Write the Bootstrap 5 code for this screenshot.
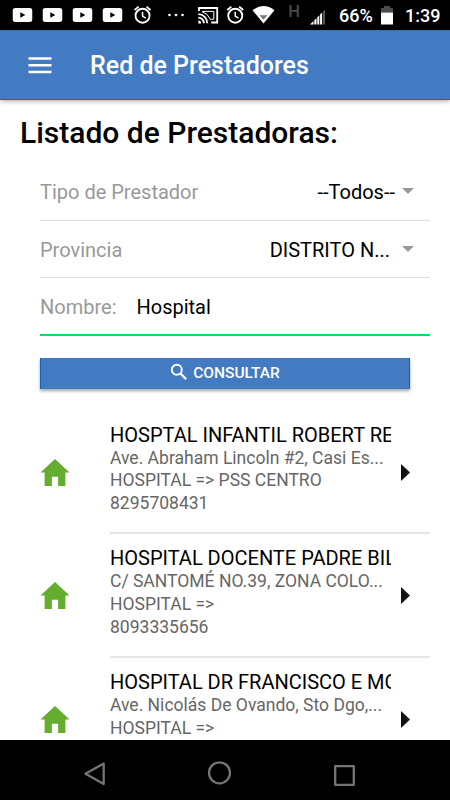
<!DOCTYPE html>
<html lang="es">
<head>
<meta charset="utf-8">
<meta name="viewport" content="width=device-width, initial-scale=1">
<title>Red de Prestadores</title>
<link href="https://cdn.jsdelivr.net/npm/bootstrap@5.3.0/dist/css/bootstrap.min.css" rel="stylesheet">
<style>
  body { font-family: Roboto, "Liberation Sans", sans-serif; color: #000; line-height: 1.2; }
  svg { display: block; flex: none; }
  .screen { width: 450px; height: 800px; }
  .status { height: 30px; font-size: 18px; font-weight: 500; line-height: 30px; padding-top: 1px; }
  .status svg { margin-top: -1px; }
  .status .pct { width: 41px; margin-left: 3px; }
  .status .clock { margin-left: 1px; }
  .appbar { height: 70px; background: #427bc2; border-bottom: 1px solid #1668b4; border-top: 1px solid #2f74bf; box-shadow: 0 1px 5px rgba(0,0,0,.35); padding-left: 28px; z-index: 1; }
  .appbar h1 { font-size: 25px; font-weight: 500; margin-left: 38px; padding-top: 2px; }
  .heading { font-size: 30px; font-weight: 500; line-height: 36px; margin: 15px 0 0 20px; }
  .fields { margin: 12px 20px 0 40px; font-size: 20px; }
  .field-row { height: 57.6px; border-bottom: 1.5px solid #dedede; padding-right: 16px; }
  .field-row span { padding-top: 2px; }
  .field-row .name { color: #999; }
  .field-row.active { border-bottom: 2px solid #03de65; }
  .field-row .value { margin-right: 12px; }
  .field-row .value.tight { margin-right: 7px; }
  .consult { height: 31px; width: 370px; margin: 22px 0 0 40px; background: #427bc2; color: #fff; font-size: 15.5px; font-weight: 500; box-shadow: 0 2px 3px rgba(0,0,0,.35); border-left: 1px solid #1163b4; border-right: 1px solid #1163b4; }
  .consult svg { margin: -2px 5px 0 0; }
  .results { margin-top: 22px; }
  .entry { height: 123.7px; padding: 0 20px 0 40px; }
  .entry .body { margin-left: 40px; border-bottom: 2px solid #e6e6e6; }
  .entry:last-child .body { border: 0; }
  .entry .copy { width: 281px; padding-top: 13px; }
  .entry h2 { font-size: 20px; font-weight: 400; line-height: 23px; margin: 0; }
  .entry p { font-size: 17.53px; line-height: 22.7px; margin: 0; color: #666; }
  .entry .house { margin-top: 48px; }
  .entry .go { margin: 53px 0 0 10px; }
  .sysnav { height: 60px; }
</style>
<script src="https://cdn.jsdelivr.net/npm/bootstrap@5.3.0/dist/js/bootstrap.bundle.min.js"></script>
</head>
<body>
<svg class="d-none" aria-hidden="true">
  <symbol id="yt" viewBox="0 0 20 14"><rect x="0" y="0" width="20" height="14" rx="3" fill="#fff"/><path d="M7.8 4.2v5.6l5-2.8z" fill="#000"/></symbol>
  <symbol id="alarm" viewBox="0 0 20 20"><g fill="none" stroke="#fff" stroke-width="1.9"><circle cx="10" cy="11" r="7.2"/><path d="M1.8 5.2 6 1.7M14 1.7l4.2 3.5"/><path d="M10 6.8v4.6l3.3 2" stroke-width="1.6"/></g></symbol>
  <symbol id="house" viewBox="0 0 28 26"><path d="M14 0 28 13h-4v13h-7v-9h-6v9H4V13H0z" fill="#64ad2e"/></symbol>
  <symbol id="next" viewBox="0 0 9 17"><path d="M0 0 9 8.5 0 17z" fill="#111"/></symbol>
  <symbol id="caret" viewBox="0 0 12 6"><path d="M0 0h12L6 6z" fill="#999"/></symbol>
</svg>
<div class="screen d-flex flex-column overflow-hidden bg-white">
  <header class="status d-flex align-items-center bg-black text-white flex-shrink-0">
    <svg width="336" height="30" viewBox="0 0 336 30">
      <use href="#yt" x="12.5" y="8" width="20" height="14"/>
      <use href="#yt" x="42.5" y="8" width="20" height="14"/>
      <use href="#yt" x="72.5" y="8" width="20" height="14"/>
      <use href="#yt" x="102.5" y="8" width="20" height="14"/>
      <use href="#alarm" x="132.8" y="5" width="19.5" height="19.5"/>
      <g fill="#fff"><circle cx="169.5" cy="15" r="1.3"/><circle cx="176" cy="15" r="1.3"/><circle cx="182.5" cy="15" r="1.3"/></g>
      <g fill="none" stroke="#fff" stroke-width="1.8">
        <path d="M199 11V8h18.2v14.5h-6"/>
        <path d="M198.3 14.2a9 9 0 0 1 9 9M198.3 17.6a5.6 5.6 0 0 1 5.6 5.6"/>
        <path d="M202 11.4h11.8v7.8h-3.6a13 13 0 0 0-8.2-7.6" stroke-width="1"/>
      </g>
      <path d="M198.3 20.6a2.8 2.8 0 0 1 2.8 2.8h-2.8z" fill="#fff"/>
      <use href="#alarm" x="225.5" y="5" width="19.5" height="19.5"/>
      <path d="M252.5 10.2Q263.5 2 274.5 10.2L263.5 23.5Z" fill="#fff"/>
      <path d="M259.5 15.2h8L263.5 19.8Z" fill="#777"/>
      <text x="288.3" y="16.8" font-size="16.5" font-weight="500" fill="#4a4a4a">H</text>
      <path d="M310 24.5 313.5 21v3.5zM314.3 20.3l2.2-2.1v6.3h-2.2zM317.3 17.3l2-2v9.2h-2zM320.1 14.5l2-2v12h-2z" fill="#fff"/>
      <path d="M322.9 11.7 325 9.6v14.9h-2.1z" fill="#555"/>
    </svg>
    <span class="pct">66%</span>
    <svg width="24" height="30" viewBox="0 0 24 30"><path d="M1 12.5V8h3V6h6v2h3v4.500z" fill="#4b4b4b"/><path d="M1 12.500h12V24.500H1z" fill="#fff"/></svg>
    <span class="clock">1:39</span>
  </header>
  <nav class="appbar d-flex align-items-center text-white flex-shrink-0 position-relative">
    <svg width="24" height="18" viewBox="0 0 24 18"><path d="M.5 2.500h23M.5 9.200h23M.5 16h23" stroke="#fff" stroke-width="2.500"/></svg>
    <h1 class="mb-0">Red de Prestadores</h1>
  </nav>
  <main class="flex-grow-1 overflow-hidden">
    <h2 class="heading">Listado de Prestadoras:</h2>
    <div class="fields">
      <div class="field-row d-flex align-items-center"><span class="name me-auto">Tipo de Prestador</span><span class="value tight">--Todos--</span><svg width="12" height="6"><use href="#caret"/></svg></div>
      <div class="field-row d-flex align-items-center"><span class="name me-auto">Provincia</span><span class="value">DISTRITO N...</span><svg width="12" height="6"><use href="#caret"/></svg></div>
      <div class="field-row active d-flex align-items-center"><span class="name">Nombre:</span><span class="ms-3 ps-1">Hospital</span></div>
    </div>
    <button class="consult d-flex align-items-center justify-content-center border-top-0 border-bottom-0 p-0">
      <svg width="18" height="18" viewBox="0 0 18 18"><g fill="none" stroke="#fff"><circle cx="6.800" cy="6.800" r="5" stroke-width="1.900"/><path d="m10.500 10.500 5.600 5.600" stroke-width="2.300"/></g></svg>
      <span>CONSULTAR</span>
    </button>
    <section class="results">
      <article class="entry d-flex align-items-start">
        <svg class="house" width="30" height="27"><use href="#house"/></svg>
        <div class="body d-flex flex-grow-1 h-100">
          <div class="copy"><h2 class="text-nowrap overflow-hidden">HOSPTAL INFANTIL ROBERT REID</h2><p>Ave. Abraham Lincoln #2, Casi Es...</p><p>HOSPITAL =&gt; PSS CENTRO</p><p>8295708431</p></div>
          <svg class="go" width="9" height="17"><use href="#next"/></svg>
        </div>
      </article>
      <article class="entry d-flex align-items-start">
        <svg class="house" width="30" height="27"><use href="#house"/></svg>
        <div class="body d-flex flex-grow-1 h-100">
          <div class="copy"><h2 class="text-nowrap overflow-hidden">HOSPITAL DOCENTE PADRE BILLINI</h2><p>C/ SANTOMÉ NO.39, ZONA COLO...</p><p>HOSPITAL =&gt;</p><p>8093335656</p></div>
          <svg class="go" width="9" height="17"><use href="#next"/></svg>
        </div>
      </article>
      <article class="entry d-flex align-items-start">
        <svg class="house" width="30" height="27"><use href="#house"/></svg>
        <div class="body d-flex flex-grow-1 h-100">
          <div class="copy"><h2 class="text-nowrap overflow-hidden">HOSPITAL DR FRANCISCO E MOSCOSO</h2><p>Ave. Nicolás De Ovando, Sto Dgo,...</p><p>HOSPITAL =&gt;</p></div>
          <svg class="go" width="9" height="17"><use href="#next"/></svg>
        </div>
      </article>
    </section>
  </main>
  <footer class="sysnav bg-black flex-shrink-0">
    <svg width="450" height="60" viewBox="0 0 450 60" fill="none" stroke="#757575" stroke-width="2.300" stroke-linejoin="round">
      <path d="M103.700 23.500v20.500L85.500 33.800z"/><circle cx="219.500" cy="32.800" r="10.500"/><rect x="335.200" y="26.200" width="18.600" height="18.600"/>
    </svg>
  </footer>
</div>
</body>
</html>
